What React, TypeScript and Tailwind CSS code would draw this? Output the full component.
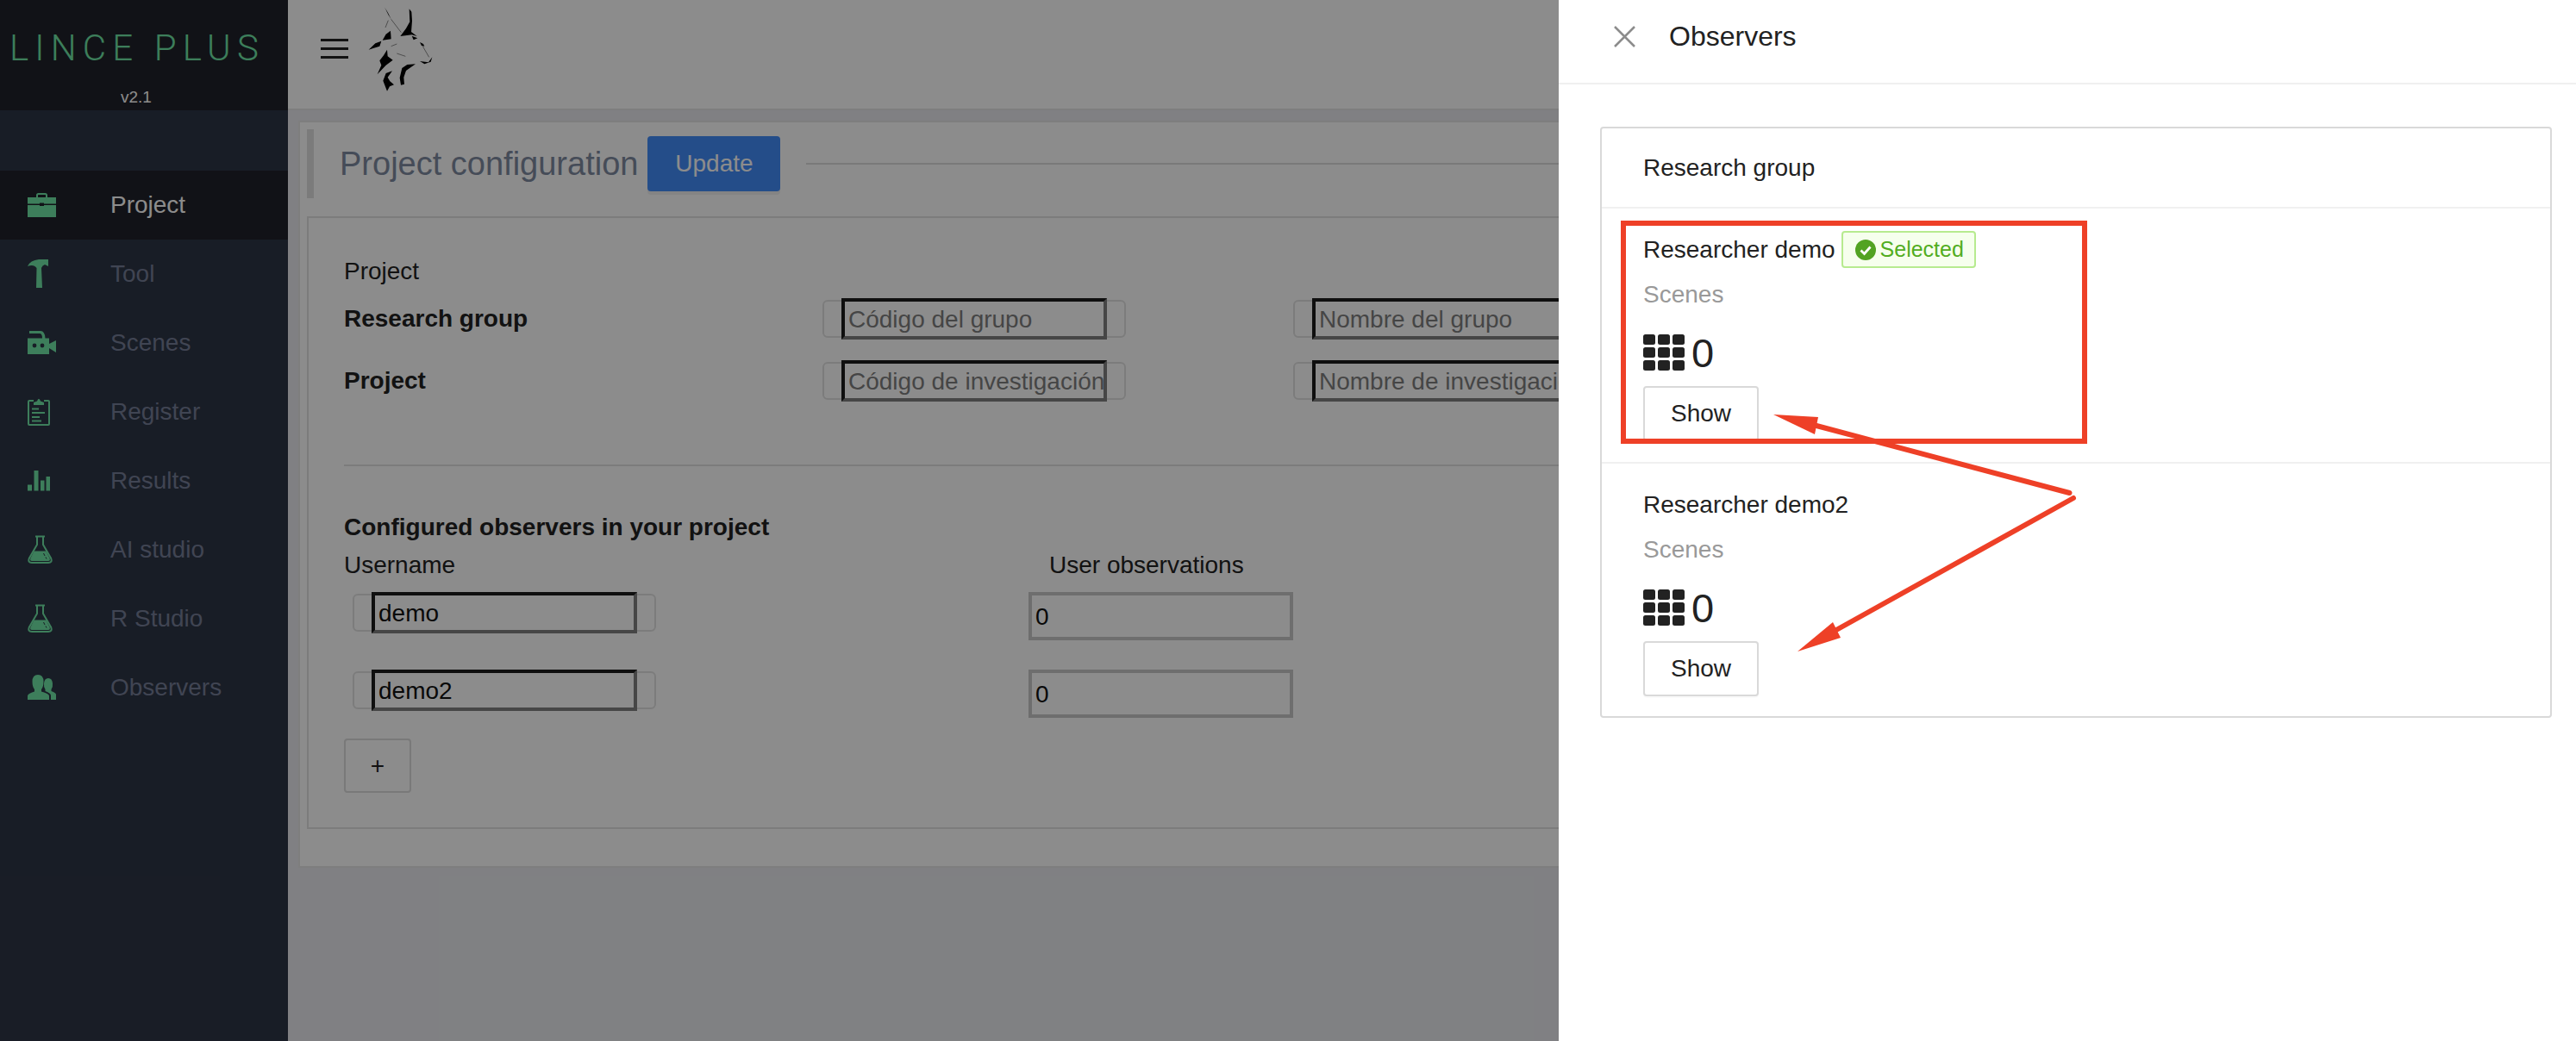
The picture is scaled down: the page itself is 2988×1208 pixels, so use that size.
import React from 'react';

const green = '#6fe5a6';

const Briefcase = () => (
    <svg viewBox="0 0 34 34" className="w-[34px] h-[34px]" fill={green}>
        <path d="M10 8V5.500Q10 3 12.500 3H20.500Q23 3 23 5.500V8H21V5.500Q21 5 20.500 5H12.500Q12 5 12 5.500V8Z" />
        <path d="M0 8H33V15.500H19V14.500H14V15.500H0ZM0 17H14V18H19V17H33V31H0Z" />
    </svg>
);

const Hammer = () => (
    <svg viewBox="0 0 34 34" className="w-[34px] h-[34px]" fill={green}>
        <path d="M0 8Q3 1 13 0H20L24 0V8L20 6Q17 7 16 10L17 33H10L10.500 10Q7 5 0 8Z" />
    </svg>
);

const Camera = () => (
    <svg viewBox="0 0 34 34" className="w-[34px] h-[34px]">
        <path fill={green} d="M2 3H15Q20 3 20.500 11.500H25V18L33 14V28L25 23V30H0V11.500H17Q17 6 14 6H2Z" />
        <circle cx="8" cy="20" r="2.400" fill="#2d3545" />
        <circle cx="17" cy="20" r="2.400" fill="#2d3545" />
    </svg>
);

const Clipboard = () => (
    <svg viewBox="0 0 34 34" className="w-[34px] h-[34px]" fill="none" stroke={green} strokeWidth="2">
        <path d="M7 4H2Q1 4 1 5V31Q1 32 2 32H24Q25 32 25 31V5Q25 4 24 4H19" />
        <path fill={green} stroke="none" d="M7 9V6L11 4.500Q13 -1 15 4.500L19 6V9Z" />
        <path d="M5 13.500H13M5 18H20M5 23H14M5 27.500H16" />
    </svg>
);

const Bars = () => (
    <svg viewBox="0 0 34 34" className="w-[34px] h-[34px]" fill={green}>
        <rect x="0" y="21.500" width="5" height="7" />
        <rect x="7.500" y="5" width="5" height="23.500" />
        <rect x="15" y="16.500" width="4.500" height="12" />
        <rect x="21.500" y="12" width="4.500" height="16.500" />
    </svg>
);

const Flask = () => (
    <svg viewBox="0 0 34 34" className="w-[34px] h-[34px]">
        <path fill="none" stroke={green} strokeWidth="2" d="M9 1.500H20M11 1.500V11L1.800 27Q0 32 5 32H24Q29 32 27.200 27L18 11V1.500" />
        <path fill={green} d="M7.500 18.500H21.500L25.700 27Q26.500 30 24 30H5Q2.500 30 3.300 27Z" />
        <path fill="none" stroke="#2d3545" strokeWidth="1" d="M18.500 21L20 24M21 25.500L22 27.500" />
    </svg>
);

const Users = () => (
    <svg viewBox="0 0 34 34" className="w-[34px] h-[34px]" fill={green}>
        <path d="M0 31V26.500Q0 24 8 21.500V19Q5.500 16 5.500 10Q5.500 2 12 2Q18.500 2 18.500 10Q18.500 16 16 19V21.500Q25 24 25 26.500V31Z" />
        <path d="M20.500 21V19Q18.500 16.500 19 12Q19.500 6 24 6Q28.500 6 29 12Q29.500 16.500 27.500 19V21Q33 23 33 25V31H27V26Q27 23.500 20.500 21Z" />
    </svg>
);

const LynxLogo = () => (
    <svg viewBox="260 20 225 300" className="w-[75px] h-[100px]" fill="#000">
        <path d="M318 25L328 42L340 66L330 50Z" />
        <path d="M403 30L411 40L413 72L410 110L430 125L412 120L372 125L392 98L405 75Z" />
        <path d="M322 118L338 106L340 135L310 139Z" />
        <path d="M262 172L285 150L306 142L300 160L280 166Z" />
        <path d="M326 172L328 195L346 208L322 226L292 258L306 226L300 210L314 192Z" />
        <path d="M344 246L322 254L312 280L326 316L335 300L350 294L336 282L328 268Z" />
        <path d="M425 222L396 224L378 236L370 270L374 295L386 292L384 268L392 245L410 232Z" />
        <path d="M440 146L452 152L456 160L446 158Z" />
        <path d="M412 124L432 132L418 138Z" />
        <path d="M483 198L470 216L440 212L456 222L478 214Z" />
        <path fill="none" stroke="#555" strokeWidth="2" d="M330 70L320 95M340 66L375 112M450 160L472 198M340 160L360 152M360 185L390 195" />
    </svg>
);

const navItems = [
    { label: 'Project', icon: <Briefcase />, active: true },
    { label: 'Tool', icon: <Hammer /> },
    { label: 'Scenes', icon: <Camera /> },
    { label: 'Register', icon: <Clipboard /> },
    { label: 'Results', icon: <Bars /> },
    { label: 'AI studio', icon: <Flask /> },
    { label: 'R Studio', icon: <Flask /> },
    { label: 'Observers', icon: <Users /> },
];

const InsetInput = ({ value, placeholder }: { value?: string; placeholder?: string }) => (
    <div className="w-[352px] h-[44px] shrink-0 border-2 border-[#e2e2e2] rounded-md flex items-center justify-center">
        <input
            readOnly
            value={value}
            placeholder={placeholder}
            className="w-[308px] h-[48px] shrink-0 bg-transparent border-4 border-t-[#1c1c1c] border-l-[#1c1c1c] border-b-[#808080] border-r-[#808080] pl-1 pt-[2px] text-[28px] text-[#111] placeholder:text-[#7f7f7f] outline-none"
        />
    </div>
);

const CountInput = () => (
    <input
        readOnly
        value="0"
        className="w-[307px] h-[56px] bg-transparent border-4 border-[#c9c9c9] px-1 pt-[2px] text-[28px] text-[#111] outline-none"
    />
);

const GridIcon = () => (
    <svg viewBox="0 0 48 42" className="w-[48px] h-[42px]" fill="#222">
        {[0, 17, 34].map((x) =>
            [0, 15, 30].map((y) => <rect key={`${x}-${y}`} x={x} y={y} width="14" height="12" rx="2.500" />)
        )}
    </svg>
);

const ObserverItem = ({ name, selected }: { name: string; selected?: boolean }) => (
    <div className="h-[296px] border-b-2 border-[#f0f0f0] last:border-b-0 pl-[48px] pt-[26px]">
        <div className="flex items-center h-[43px] text-[28px] text-[#222]">
            <span>{name}</span>
            {selected && (
                <span className="ml-[7px] h-[43px] w-[156px] flex items-center border-2 border-[#b7eb8f] bg-[#f6ffed] rounded pl-[14px] text-[25px] text-[#52ad1f]">
                    <svg viewBox="0 0 24 24" className="w-[24px] h-[24px] mr-[5px]">
                        <circle cx="12" cy="12" r="12" fill="#52a322" />
                        <path d="M6.500 12.500L10.500 16.500L17.500 8.500" fill="none" stroke="#fff" strokeWidth="2.800" />
                    </svg>
                    Selected
                </span>
            )}
        </div>
        <div className="mt-[13px] h-[36px] leading-[36px] text-[28px] text-[#999]">Scenes</div>
        <div className="mt-[28px] flex items-center h-[42px]">
            <GridIcon />
            <span className="ml-[8px] pt-[2px] text-[47px] leading-[42px] text-[#222]">0</span>
        </div>
        <button className="mt-[18px] w-[134px] h-[64px] border-2 border-[#d9d9d9] rounded bg-white text-[28px] text-[#222] shadow-[0_2px_0_rgba(0,0,0,0.02)]">
            Show
        </button>
    </div>
);

const App = () => {
    return (
        <div className="relative w-[2988px] h-[1208px] overflow-hidden flex font-['Liberation_Sans',sans-serif] bg-[#e9eaee]">
            <aside className="w-[334px] shrink-0 bg-[#2d3545]">
                <div className="h-[128px] bg-[#1f212a] flex flex-col items-start pl-[11px]">
                    <span className="mt-[31px] font-['Roboto',sans-serif] font-light text-[42px] leading-[50px] tracking-[7.200px] text-[#6fe5a6] whitespace-nowrap">
                        LINCE PLUS
                    </span>
                    <span className="mt-[21px] ml-[129px] text-[19px] leading-[22px] text-white">v2.1</span>
                </div>
                <nav className="mt-[70px]">
                    {navItems.map((item) => (
                        <div
                            key={item.label}
                            className={`h-[80px] flex items-center pl-[32px] ${item.active ? 'bg-[#1f212a]' : ''}`}
                        >
                            {item.icon}
                            <span className={`ml-[62px] text-[28px] ${item.active ? 'text-white' : 'text-[#767e97]'}`}>
                                {item.label}
                            </span>
                        </div>
                    ))}
                </nav>
            </aside>

            <main className="flex-1 min-w-0">
                <header className="h-[128px] bg-white border-b-2 border-[#e6e6e6] flex items-start pl-[38px] pt-[7px]">
                    <svg viewBox="0 0 32 24" className="w-[32px] h-[24px] mt-[38px]" fill="#222">
                        <rect y="0" width="32" height="3" />
                        <rect y="10" width="32" height="3" />
                        <rect y="20" width="32" height="3" />
                    </svg>
                    <div className="ml-[23px]">
                        <LynxLogo />
                    </div>
                </header>

                <section className="mx-[12px] mt-[12px] h-[867px] bg-white border-2 border-[#e6e6e6] p-[8px]">
                    <div className="flex items-center h-[80px]">
                        <div className="w-[8px] h-[80px] bg-[#e0e0e0]" />
                        <h1 className="ml-[30px] text-[38px] text-[#7f8aa0] whitespace-nowrap">Project configuration</h1>
                        <button className="ml-[11px] w-[154px] h-[64px] bg-[#438cf9] rounded text-white text-[28px] shadow-[0_4px_0_rgba(0,0,0,0.06)]">
                            Update
                        </button>
                        <div className="ml-[30px] flex-1 h-[2px] bg-[#dcdcdc]" />
                    </div>

                    <div className="mt-[21px] h-[711px] border-2 border-[#e2e2e2] pl-[41px] pt-[44px] text-[28px] text-[#222]">
                        <div className="h-[36px] leading-[36px]">Project</div>
                        <div className="mt-[13px] flex items-center h-[47px]">
                            <span className="w-[555px] font-bold">Research group</span>
                            <InsetInput placeholder="Código del grupo" />
                            <div className="ml-[194px]">
                                <InsetInput placeholder="Nombre del grupo" />
                            </div>
                        </div>
                        <div className="mt-[25px] flex items-center h-[47px]">
                            <span className="w-[555px] font-bold">Project</span>
                            <InsetInput placeholder="Código de investigación" />
                            <div className="ml-[194px]">
                                <InsetInput placeholder="Nombre de investigación" />
                            </div>
                        </div>

                        <div className="mt-[74px] h-[2px] bg-[#e2e2e2]" />

                        <div className="mt-[53px] h-[36px] leading-[36px] font-bold">Configured observers in your project</div>
                        <div className="mt-[8px] flex h-[36px] leading-[36px]">
                            <span className="w-[818px]">Username</span>
                            <span>User observations</span>
                        </div>
                        <div className="mt-[13px] flex items-start">
                            <div className="w-[794px] pl-[10px] h-[48px] flex items-center">
                                <InsetInput value="demo" />
                            </div>
                            <CountInput />
                        </div>
                        <div className="mt-[34px] flex items-start">
                            <div className="w-[794px] pl-[10px] h-[48px] flex items-center">
                                <InsetInput value="demo2" />
                            </div>
                            <CountInput />
                        </div>
                        <button className="mt-[24px] w-[78px] h-[63px] border-2 border-[#dcdcdc] rounded text-[28px] text-[#222]">+</button>
                    </div>
                </section>
            </main>

            {/* modal mask */}
            <div className="absolute inset-0 bg-black/45" />

            <div className="absolute top-0 bottom-0 right-0 w-[1180px] bg-white">
                <div className="h-[98px] border-b-2 border-[#f0f0f0] flex items-center pl-[64px] pb-[12px]">
                    <svg viewBox="0 0 25 25" className="w-[25px] h-[25px]" fill="none" stroke="#8c8c8c" strokeWidth="2.500">
                        <path d="M1 1L24 24M24 1L1 24" />
                    </svg>
                    <span className="ml-[39px] text-[32px] text-[#222]">Observers</span>
                </div>
                <div className="mt-[49px] ml-[48px] w-[1104px] h-[686px] border-2 border-[#d9d9d9] rounded">
                    <div className="h-[93px] border-b-2 border-[#f0f0f0] pl-[48px] flex items-center text-[28px] text-[#222]">
                        Research group
                    </div>
                    <ObserverItem name="Researcher demo" selected />
                    <ObserverItem name="Researcher demo2" />
                </div>
            </div>

            {/* annotations on top of the screenshot */}
            <svg viewBox="0 0 2988 1208" className="absolute inset-0 w-[2988px] h-[1208px] pointer-events-none">
                <rect x="1883" y="259" width="535" height="253" fill="none" stroke="#ee4027" strokeWidth="6" />
                <path d="M2400.500 572L2107 494" fill="none" stroke="#ee4027" strokeWidth="6" strokeLinecap="round" />
                <path d="M2057 481L2109 484L2105 504Z" fill="#ee4027" />
                <path d="M2405 578L2130 731" fill="none" stroke="#ee4027" strokeWidth="6" strokeLinecap="round" />
                <path d="M2085 756L2126 722L2135 740Z" fill="#ee4027" />
            </svg>
        </div>
    );
};

export default App;
